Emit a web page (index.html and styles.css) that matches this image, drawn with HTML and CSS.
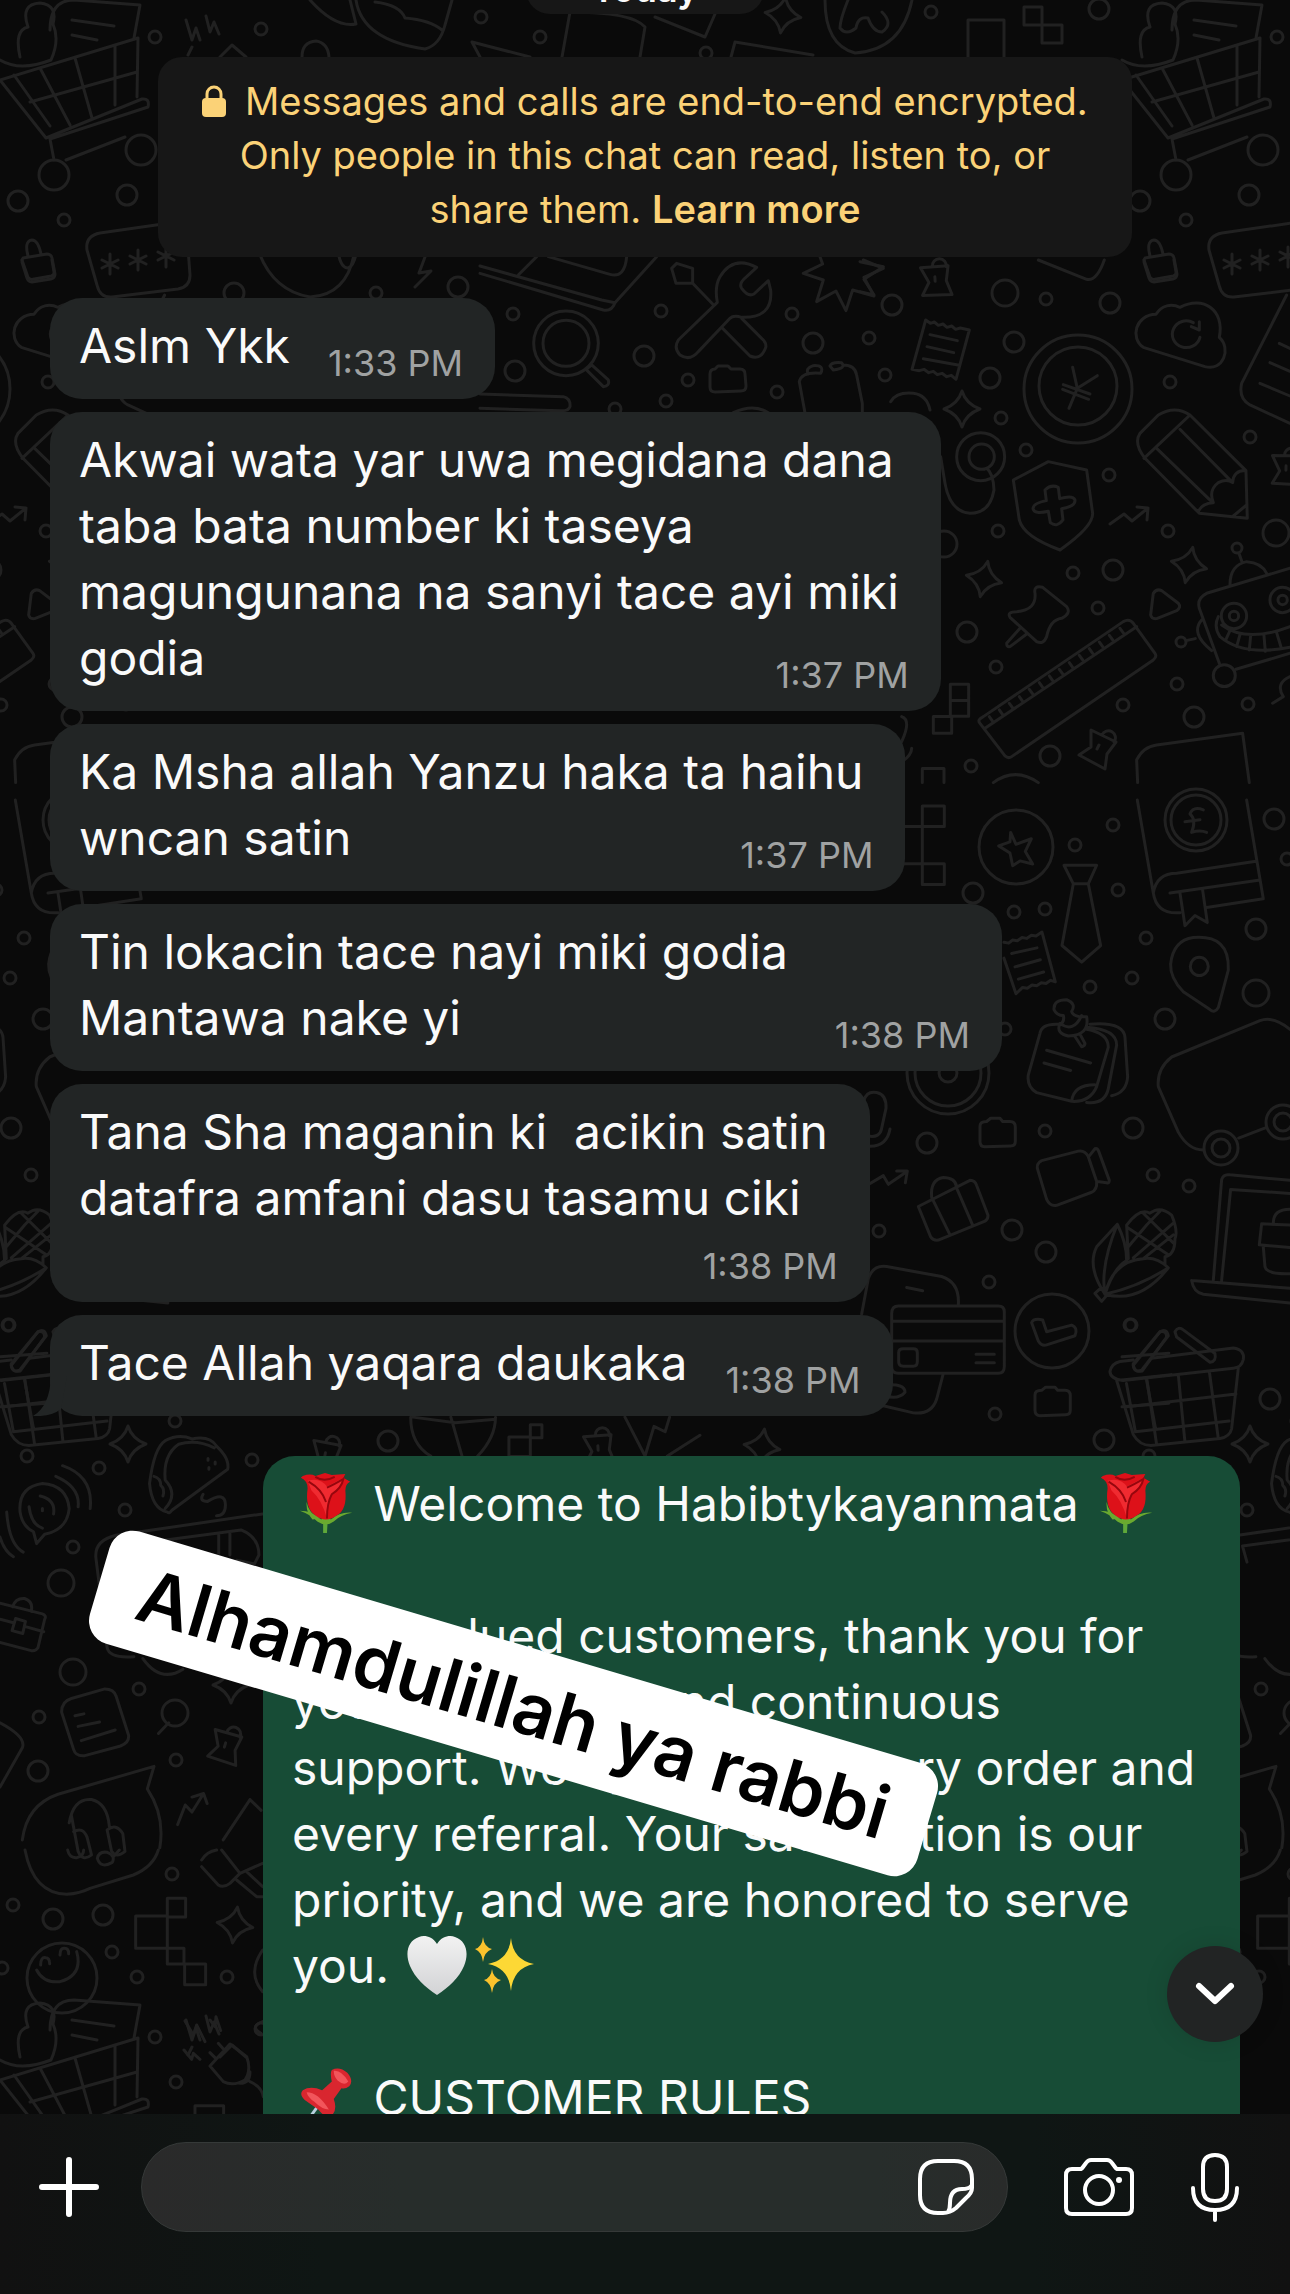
FILE: index.html
```html
<!DOCTYPE html>
<html lang="ha">

<head>
    <meta charset="UTF-8">
    <meta name="viewport" content="width=device-width, initial-scale=1.0">
    <title>Chat</title>
    <link rel="stylesheet" href="styles.css">
</head>

<body>
    <div class="screen">
        <main class="chat">
            <!-- wallpaper -->
            <svg class="wallpaper" aria-hidden="true">
                <defs>
                    <path id="sparkle" d="M0-18Q4-5 18 0Q4 5 0 18Q-4 5-18 0Q-4-5 0-18z" />
                    <path id="tack" d="M-7-17L18-5L9 7L7 22L-19 8L-7 0zM4-12a7 7 0 1 1 12 7M-1 2l2-4" />
                    <path id="trend" d="M-20 10L-6 0L2 7L18-6M7-7L18-6L17 6" />
                    <path id="folder" d="M-17-6q0-5 5-5l3-3h10l3 3h9q5 0 5 5l1 12q0 5-5 5l-26 1q-5 0-5-5z" />
                    <g id="doodles">
                        <!-- shopping cart -->
                        <path d="M0 80L138 38L137 97M0 80L46 138L142 99q8-1 6 8L50 139M14 75L50 126M40 68L70 125M75 58L92 118M115 46V105M30 102L137 72M50 139L54 160M66 160L125 137" />
                        <path d="M20 57Q14 30 28 27Q20 4 40 3Q58 5 53 24M50 30Q50 0 74 0L140 5L134 38M72 20L114 26M72 35L97 40M0 60Q20 72 51 60Q60 40 53 24" />
                        <circle cx="54" cy="175" r="15" /><circle cx="141" cy="150" r="15" />
                        <!-- password card and locks -->
                        <path d="M100 233L170 223q16-2 17 12L190 275q0 12-12 14L112 297q-12 1-15-12L87 250q-2-14 13-17zM110 254v20M102 260l16 8M118 260l-16 8M138 250v20M130 256l16 8M146 256l-16 8M166 247v20M158 252l16 8M174 252l-16 8" />
                        <path d="M23 258l24-4q4 0 5 4l3 16q0 4-4 5l-19 3q-4 0-5-4l-5-16q0-3 1-4zM28 256q-4-15 4-16q6 0 9 14" />
                        <path d="M255 240Q268 290 310 297Q352 295 356 240M338 250q2 18 10 18q8-2 10-28M425 257l-6 16l12-2l-16 16" />
                        <!-- top row -->
                        <path d="M186 20l6 20l4-12l4 12M206 16l4 16l4-10l5 12M188 55l4-8M220 57l12-12l14 12M302 57q0-15 14-16q12 2 13 16M310 0Q335 28 356 24L350 0M356 0Q362 40 425 49Q440 45 445 25L452 0M375 2Q400 5 405 18Q430 20 442 30M472 42l58 15M472 42l8 15M570 12q62 0 75 15l-5 30M570 12l-8 45M655 17l50 20l10-23M735 42l78 13M735 42l-4 15" />
                        <path d="M825 0q0 45 30 53Q902 50 912 0M848 0q-8 20-8 28q6 8 16 0q2-12 12-10q5 14 14 14q12-8 0-20M968 57V20h36v37M1024 7h18v18h-18zM1042 25h20v18h-20z" />
                        <use href="#sparkle" transform="translate(783 15) rotate(8)" />
                        <!-- laptop, magnifier, wrench and star -->
                        <g transform="translate(480 240) scale(.3333)">
                            <path d="M0 78L365 180L405 188L530 50M0 100L370 210Q395 215 405 188M115 105L170 50M205 50L390 103Q435 115 440 50M0 462L250 470Q272 475 270 500Q265 515 240 512L0 505" />
                            <circle cx="258" cy="310" r="97" /><circle cx="258" cy="310" r="69" />
                            <path d="M318 388L335 375L385 420Q390 438 370 440zM575 85L590 70L638 85V130H588zM638 130L698 192M830 82Q760 45 720 110Q703 140 712 187L595 300Q580 325 600 345Q630 365 655 335L750 235Q760 225 785 232Q880 235 872 150L865 122L822 162Q805 172 785 145Q775 130 800 110zM725 262L810 348Q845 362 858 320Q858 305 845 295L785 235" />
                            <path d="M1020 50L1028 72L970 100L1030 120L1010 185L1068 153L1098 212L1118 150L1182 168L1152 112L1210 85L1150 60M975 518L958 425Q965 395 1022 400Q1035 375 1000 377Q975 385 985 402M1050 378Q1055 365 1085 368Q1100 385 1060 390zM1090 375Q1125 375 1130 405L1147 490V518M760 518Q820 490 865 518" />
                        </g>
                        <use href="#folder" x="727" y="380" />
                        <use href="#tack" transform="translate(935 279) rotate(-30)" />
                        <!-- receipt, coin, cloud, pencil and the rest of that block -->
                        <g transform="translate(860 260) scale(.3333)">
                            <path d="M197 180l14 10l12-4l12 10l14-4l12 10l14-4l12 10l14-4l27 6L288 358l-14-12l-14 4l-14-10l-14 4l-12-10l-14 4l-14-10l-14 4l-22-4zM210 224l82 18M201 260l80 18M190 296l108 20" />
                            <path d="M535 0L680 58Q710 65 733 0M852 0L870 52Q875 60 885 58L940 48Q950 45 948 35L942 0M0 5L70 20L12 58L42 105L0 95" />
                            <path d="M638 322L652 385L712 347M652 385L627 445M610 374l80 28M608 388l78 30" />
                            <path d="M850 262C810 235 825 165 888 163C905 135 935 130 960 142C1030 105 1095 150 1078 232C1115 265 1090 335 1035 320zM1020 232A42 40 0 1 1 1000 188M1018 185L1018 210L994 200" />
                            <path d="M1280 105L1145 370Q1135 415 1170 435L1290 490M1258 250l32 15M1230 308l60 26M1200 370l90 38" />
                            <path d="M855 595Q820 550 840 520L895 465Q945 435 990 465L1158 632L1162 775L1018 760zM852 595L990 465M890 565L1055 725M960 508L1115 665M1015 755Q1025 730 1060 728Q1045 690 1075 668Q1100 655 1118 668Q1120 630 1158 632M1120 768L1160 735" />
                            <circle cx="362" cy="590" r="72" /><circle cx="365" cy="590" r="38" />
                            <path d="M380 625Q400 640 402 690Q390 760 330 760Q270 755 255 670L242 590M92 425Q110 395 160 400Q200 405 210 450" />
                            <path d="M565 605L680 630L698 760Q700 800 600 870Q490 830 478 780L460 660zM555 690q18-18 40-8l4 34q40-12 46 4q2 20-40 26l4 34q-18 24-38 8l-6-34q-42 10-46-8q0-16 40-24z" />
                            <path d="M525 1000Q520 975 548 982L620 1040Q635 1060 605 1075Q570 1080 560 1130Q550 1155 530 1145L450 1072Q440 1055 470 1055Q530 1050 525 1000zM480 1105L440 1150Q440 1162 450 1160L500 1122" />
                            <path d="M880 1000Q890 985 905 992L955 1030Q965 1042 950 1052L890 1076Q875 1078 872 1065z" />
                            <path d="M360 1390Q350 1380 370 1370L790 1085Q808 1075 820 1090L885 1180Q892 1190 880 1200L455 1490Q445 1497 435 1488zM375 1405L830 1100M388 1370l10 14M418 1350l10 14M448 1330l10 14M478 1310l10 14M508 1288l10 14M538 1268l10 14M568 1248l10 14M598 1228l10 14M628 1208l10 14M658 1186l10 14M688 1166l10 14M718 1146l10 14M748 1126l10 14M780 1105l10 14" />
                            <path d="M1290 925L1040 1000Q1010 1015 1018 1045L1080 1215M1110 975Q1110 915 1160 905Q1205 908 1220 940M1137 880l10 28M1025 1080Q990 1120 1055 1172M978 1142l28-6M1128 1228L1290 1180M1075 1070Q1060 1100 1080 1130Q1150 1190 1290 1162M1085 1095Q1160 1150 1290 1100M1110 1112l-12 26M1140 1124l-10 36M1172 1128l-4 42M1212 1126l4 48M1250 1118l14 46" />
                            <circle cx="1122" cy="1068" r="38" /><circle cx="1268" cy="1020" r="38" /><circle cx="1093" cy="1247" r="33" /><circle cx="1122" cy="1068" r="14" /><circle cx="1268" cy="1020" r="14" />
                            <path d="M271 1273h55v96h-55zM271 1322h55M220 1370h55v50h-55zM187 1568v-42h65v42M0 1290L155 1310Q235 1280 235 1205M125 1370q30 10 0 75M155 1465q0 20-28 40M1290 1250q-45 20-20 60l-32 20" />
                            <path d="M400 1568Q465 1520 535 1568M833 1568L830 1500Q850 1460 890 1455L1148 1420L1168 1568" />
                        </g>
                        <circle cx="1078" cy="389" r="54" /><circle cx="1078" cy="386" r="39" />
                        <use href="#sparkle" x="962" y="409" /><use href="#sparkle" transform="translate(984 579) rotate(12)" /><use href="#sparkle" transform="translate(1189 565) rotate(12)" />
                        <use href="#trend" x="1130" y="514" />
                        <use href="#tack" x="1098" y="747" /><use href="#tack" transform="translate(1286 468) rotate(-25)" />
                        <!-- book, tie, notes, corn, basket -->
                        <g transform="matrix(.3333 0 0 .3954 860 800)">
                            <path d="M832 0L880 235Q890 290 960 285M1160 0L1210 250L1040 272M960 285M880 235Q890 185 950 185L1188 155M930 235L1195 203M960 235L975 318L1005 292L1042 310L1028 228M1040 82Q1020 75 995 82Q1010 50 990 35Q1000 15 1030 25M975 55l45-5" />
                            <path d="M187 15h66v52h-66zM120 67h67v94h-67M187 161h66v53h-66z" />
                            <path d="M452 82l16 30l46-14l-18 32l22 32l-38-8l-22 12l-8-32l-34-18l34-10z" />
                            <path d="M612 165H710L685 212H640zM640 212L606 368L665 410L722 368L685 212" />
                            <path d="M432 360l14 2l12-8l14 2l14-8l14 2l14-8l14 2l18-10L586 460l-14-4l-14 8l-14-2l-14 8l-14-2l-14 8l-14-2l-20 16L432 400M455 388l76-14M465 422l76-18M475 453l76-18" />
                            <path d="M1000 348Q1110 340 1105 430L1075 525Q1065 540 1050 530L970 485Q930 450 932 415Q940 355 1000 348z" />
                            <ellipse cx="1018" cy="421" rx="27" ry="23" />
                            <path d="M595 567Q545 565 540 590L505 695Q500 725 530 740L635 762Q690 765 710 725L745 625Q745 590 680 580M635 762Q640 720 705 720M680 575Q770 580 770 620L745 730Q735 770 680 765M690 567Q790 560 795 600L803 700Q800 740 755 748M560 633L692 665M552 665L632 684M582 530Q580 505 620 505Q650 515 635 535Q640 550 680 548Q690 595 625 597Q590 590 598 570Q615 560 610 545Q590 545 582 530zM600 565Q640 590 665 545M645 598l20 26q10-2 10-8l-15-24" />
                            <path d="M1290 580Q1240 545 1200 558L935 650Q890 680 895 725L955 840Q985 885 1030 885M1136 855L1220 828M1060 1215L1085 960Q1090 945 1110 948L1290 962M1085 1215L1112 985L1290 995M995 1215L1290 1235M995 1215Q1000 1245 1030 1250L1290 1272M1290 1075L1205 1072L1198 1125L1290 1132M1210 1130L1215 1180Q1220 1200 1290 1198M1240 1070Q1240 1035 1290 1035" />
                            <path d="M360 825q0-12 20-12l12-8h28l8 8h22q16 0 16 14v36q0 12-14 12l-78 2q-14 0-14-14zM525 1505q0-12 20-12l12-8h28l8 8h22q16 0 16 14v36q0 12-14 12l-78 2q-14 0-14-14z" />
                            <path d="M535 940Q525 920 545 912L655 888Q675 885 685 902L710 965Q712 985 695 992L590 1025Q570 1028 560 1010zM688 900L705 882Q712 880 716 888L748 962Q748 970 740 968L712 965" />
                            <path d="M175 1028L330 962Q345 962 350 975L384 1050Q385 1060 375 1065L235 1113Q220 1115 212 1105zM215 1005Q210 960 250 955Q285 955 290 978M215 1005L270 1100M288 978L338 1075M0 985L70 950L85 972L140 940M110 938h32l-6 30M12 760Q20 735 50 740Q80 745 78 780L65 830Q60 855 25 850M90 832Q80 880 20 875" />
                            <path d="M735 1250Q680 1180 710 1130L772 1073Q800 1120 800 1165Q760 1185 735 1250zM735 1250Q720 1180 772 1073M735 1250Q760 1165 850 1160Q890 1155 925 1183Q840 1275 735 1250Q840 1230 925 1183M705 1248l18-14l20 16l-18 18zM800 1075Q840 1030 870 1045Q900 1025 935 1050Q955 1090 945 1110Q945 1150 915 1155V1175M800 1075L805 1160M800 1080L925 1150M850 1045L940 1120M805 1130L860 1075L900 1040M820 1158L940 1070M850 1160L940 1100" />
                            <path d="M5 1300L25 1210Q40 1175 80 1180L245 1205Q300 1220 295 1278M140 1233l48 8M115 1280H415Q433 1280 433 1295V1432Q433 1450 415 1450H115Q95 1450 95 1432V1300Q95 1280 115 1280zM95 1318H433M95 1368H433M130 1388h30q12 0 12 10v22q0 12-12 12h-30q-14 0-14-12v-22q0-10 14-10zM348 1402h55M348 1423h55M250 1450L230 1515Q215 1555 160 1550L60 1530M75 1480q60-5 60 18q-20 20-65 8" />
                            <path d="M515 1322Q520 1310 548 1315L560 1345L635 1328Q655 1335 645 1355L560 1378Q545 1382 535 1368z" />
                            <path d="M875 1412L1120 1386Q1155 1390 1150 1415Q1145 1435 1120 1437L790 1468Q750 1465 750 1445Q755 1425 780 1420L820 1416M820 1430L900 1345Q920 1335 925 1355L845 1442Q825 1450 820 1430zM945 1345Q955 1330 970 1340L1065 1400Q1070 1420 1050 1422L950 1358zM770 1468L820 1605Q840 1635 880 1632L1080 1615Q1110 1610 1115 1590L1135 1436M860 1462L890 1630M955 1454L975 1624M1048 1444L1075 1615M795 1535L1128 1502" />
                        </g>
                        <circle cx="1016" cy="847" r="37" /><circle cx="1052" cy="1331" r="37" /><circle cx="948" cy="1073" r="41" /><circle cx="948" cy="1073" r="33" /><circle cx="948" cy="1073" r="9" />
                        <circle cx="1221" cy="1148" r="17" /><circle cx="1221" cy="1148" r="9" /><circle cx="1283" cy="1122" r="17" /><circle cx="1283" cy="1122" r="9" /><circle cx="1196" cy="820" r="31" /><circle cx="1196" cy="820" r="25" />
                        <!-- taco, bell, briefcase, headset -->
                        <g transform="matrix(.4464 0 0 .3571 0 1280)">
                            <path d="M375 650Q340 640 335 570Q345 470 370 450Q400 430 430 445Q470 435 485 465Q515 500 510 530L385 645Q380 655 375 650zM370 640Q400 600 370 560Q365 490 400 460Q440 445 480 470M345 550q15 5 15 25q10 10 5 30M455 600q-10 20 10 20q40-30 40 10q0 30-20 30M466 500v5M482 510v5M468 525v5" />
                            <path d="M45 650Q40 580 95 570Q150 575 155 640Q150 700 100 712L82 738L75 705Q50 690 45 650zM65 635q5 50 30 60M90 605q35 10 30 50M95 640v6M140 520Q210 550 202 640M125 550Q180 580 175 635M15 650Q20 740 52 762M0 720q10 40 30 55" />
                            <path d="M588 655L260 715Q210 730 215 780L240 1030Q245 1060 300 1055M280 790L270 745L540 700Q580 720 580 770L570 795L530 785M490 715v50M515 710v60M320 1060Q360 1130 410 1090" />
                            <path d="M0 905L95 935Q105 940 100 950L85 1030Q80 1040 70 1038L0 1015M0 950L30 960M55 970L98 985M28 915Q35 890 55 892Q75 900 70 928M35 948l22 8l-6 34l-24-8z" />
                            <path d="M160 1172L235 1145Q255 1145 260 1165L288 1275Q290 1295 270 1305L190 1332Q170 1335 165 1315L138 1210Q138 1180 160 1172zM168 1220l20-5M175 1250l48-12M182 1290l76-30M378 1240L355 1270M0 1240Q60 1280 50 1310L0 1420" />
                            <path d="M50 1568Q60 1470 130 1440L345 1362L330 1425Q370 1500 358 1590M155 1520Q165 1450 205 1455Q240 1465 245 1530M160 1500L175 1600Q185 1630 205 1610L195 1560Q185 1530 165 1545M240 1540q20-20 35 10l5 50q-20 20-30 0zM560 1455L585 1485M560 1455L500 1568M398 1525L415 1470L430 1490L455 1440M430 1448l26-10l8 28" />
                            <path d="M920 384Q920 460 965 493M1110 384Q1110 440 1070 493M1010 384L1035 493M925 384l95 16l90-10M1140 440h48v54h-48zM1188 405h26v37h-26zM1400 384L1445 493L1465 410L1490 425L1500 384M1568 435L1495 493" />
                            <path d="M0 215L105 205M25 235L85 145Q100 140 100 160L45 255Q25 260 25 235zM0 280L110 265M10 290L30 425L240 395M55 280L75 415M0 355L105 345" />
                        </g>
                        <use href="#tack" transform="translate(225 1745) rotate(-10)" /><use href="#tack" transform="translate(325 1455) rotate(-15)" /><use href="#tack" transform="translate(598 1448) rotate(-30)" />
                        <use href="#sparkle" x="128" y="1444" /><use href="#sparkle" x="231" y="1685" /><use href="#sparkle" transform="translate(762 1447) rotate(8)" /><use href="#sparkle" transform="translate(235 1925) rotate(8)" />
                        <!-- bottom left corner -->
                        <g transform="translate(0 1850) scale(.3333)">
                            <path d="M75 0Q100 130 200 133Q240 130 270 115L400 75Q460 50 475 0M203 0q5 25 28 23q20-5 20-23M292 25q5-22 30-18q25 10 15 30q-35 20-45-12zM340 20L358 0M605 30Q620 5 650 0M605 50L655 105Q670 115 690 100L720 70L665 0M720 70L788 40M710 90L770 140H788M740 65L788 110" />
                            <path d="M407 198h95v97h-95zM502 145h55v56h-55zM502 295h50v47h-50zM554 342h63v62h-63z" />
                            <path d="M110 360Q130 400 180 395Q250 375 230 305M122 345q0-25 15-22q12 0 12 18M180 315q0-22 14-20q12 0 12 16M788 300Q740 370 788 425M788 515q-40 15-5 35" />
                            <path d="M555 513L580 555L590 525L615 575M630 510L645 530L648 500L662 542M552 600L575 628L580 610L600 628M630 648L690 582L740 620Q755 660 735 690Q700 710 670 695zM655 580l18 20M630 608l18 18M720 700Q750 700 750 665M750 695Q785 710 790 740" />
                            <path d="M585 792V767h86v25" />
                        </g>
                        <circle cx="62" cy="1978" r="35" />
                        <!-- loose dots -->
                        <g>
                            <circle cx="892" cy="305" r="10" /><circle cx="1005" cy="293" r="13" /><circle cx="1046" cy="299" r="6" /><circle cx="1110" cy="303" r="10" /><circle cx="869" cy="338" r="6" /><circle cx="1014" cy="342" r="10" /><circle cx="885" cy="375" r="6" /><circle cx="990" cy="378" r="10" /><circle cx="1170" cy="382" r="6" /><circle cx="1001" cy="418" r="6" /><circle cx="1026" cy="450" r="6" /><circle cx="1109" cy="475" r="6" /><circle cx="1250" cy="437" r="6" /><circle cx="998" cy="531" r="6" /><circle cx="1168" cy="531" r="6" /><circle cx="1276" cy="533" r="13" /><circle cx="944" cy="544" r="13" /><circle cx="1073" cy="573" r="6" /><circle cx="1113" cy="570" r="10" /><circle cx="1098" cy="608" r="6" /><circle cx="967" cy="632" r="10" /><circle cx="996" cy="667" r="6" /><circle cx="1177" cy="684" r="6" /><circle cx="1248" cy="704" r="6" /><circle cx="1123" cy="705" r="6" /><circle cx="1194" cy="717" r="10" /><circle cx="1050" cy="756" r="10" /><circle cx="971" cy="766" r="6" /><circle cx="1237" cy="548" r="5" /><circle cx="1181" cy="642" r="5" />
                            <circle cx="1075" cy="845" r="6" /><circle cx="1113" cy="825" r="6" /><circle cx="1274" cy="819" r="10" /><circle cx="1287" cy="859" r="6" /><circle cx="973" cy="893" r="10" /><circle cx="1014" cy="912" r="6" /><circle cx="1045" cy="909" r="6" /><circle cx="1118" cy="890" r="6" /><circle cx="1146" cy="938" r="6" /><circle cx="1132" cy="978" r="6" /><circle cx="1090" cy="987" r="6" /><circle cx="1256" cy="929" r="10" /><circle cx="1256" cy="993" r="13" /><circle cx="1165" cy="1019" r="10" /><circle cx="1005" cy="1029" r="6" /><circle cx="1133" cy="1128" r="10" /><circle cx="1045" cy="1131" r="6" /><circle cx="927" cy="1143" r="10" /><circle cx="1153" cy="1175" r="6" /><circle cx="1189" cy="1186" r="6" /><circle cx="879" cy="1231" r="6" /><circle cx="1012" cy="1230" r="10" /><circle cx="1046" cy="1252" r="10" /><circle cx="989" cy="1282" r="6" /><circle cx="1131" cy="1325" r="6" /><circle cx="1270" cy="1399" r="10" /><circle cx="995" cy="1414" r="6" /><circle cx="1104" cy="1440" r="10" />
                            <circle cx="8" cy="1325" r="6" /><circle cx="175" cy="1421" r="6" /><circle cx="27" cy="1456" r="6" /><circle cx="99" cy="1468" r="6" /><circle cx="252" cy="1460" r="6" /><circle cx="388" cy="1441" r="10" /><circle cx="125" cy="1510" r="6" /><circle cx="73" cy="1547" r="6" /><circle cx="61" cy="1583" r="13" /><circle cx="139" cy="1689" r="6" /><circle cx="73" cy="1672" r="13" /><circle cx="39" cy="1717" r="6" /><circle cx="176" cy="1760" r="6" /><circle cx="38" cy="1771" r="10" /><circle cx="175" cy="1713" r="13" /><circle cx="172" cy="1874" r="6" /><circle cx="13" cy="1905" r="6" /><circle cx="53" cy="1919" r="10" /><circle cx="103" cy="1915" r="10" /><circle cx="112" cy="1952" r="6" /><circle cx="137" cy="1977" r="6" /><circle cx="227" cy="1977" r="6" /><circle cx="2" cy="1968" r="6" /><circle cx="176" cy="2082" r="6" />
                            <circle cx="155" cy="37" r="6" /><circle cx="261" cy="29" r="6" /><circle cx="481" cy="17" r="6" /><circle cx="540" cy="37" r="6" /><circle cx="931" cy="12" r="6" /><circle cx="1099" cy="9" r="10" /><circle cx="18" cy="201" r="10" /><circle cx="127" cy="195" r="10" /><circle cx="64" cy="220" r="6" /><circle cx="234" cy="293" r="10" /><circle cx="376" cy="293" r="6" /><circle cx="458" cy="287" r="10" /><circle cx="706" cy="53" r="6" />
                            <circle cx="513" cy="314" r="6" /><circle cx="515" cy="371" r="10" /><circle cx="644" cy="356" r="10" /><circle cx="661" cy="311" r="6" /><circle cx="688" cy="380" r="6" /><circle cx="666" cy="401" r="6" /><circle cx="615" cy="409" r="6" /><circle cx="777" cy="392" r="6" /><circle cx="792" cy="314" r="6" /><circle cx="813" cy="343" r="10" />
                        </g>
                    </g>
                </defs>
                <use href="#doodles" />
                <use href="#doodles" x="-1122" />
                <use href="#doodles" x="1122" />
                <use href="#doodles" y="2000" />
            </svg>

            <div class="day">Today</div>

            <div class="notice">
                <svg class="lock" viewBox="0 0 24 32" aria-hidden="true">
                    <rect x="0" y="13" width="24" height="19" rx="4" fill="currentColor" />
                    <path d="M5 15V9a7 7 0 0 1 14 0v6" fill="none" stroke="currentColor" stroke-width="3" />
                </svg>
                Messages and calls are end-to-end encrypted.<br>Only people in this chat can read, listen to, or<br>share them. <a href="#">Learn more</a>
            </div>

            <div class="bubble">Aslm Ykk<time class="time">1:33 PM</time></div>
            <div class="bubble">Akwai wata yar uwa megidana dana<br>taba bata number ki taseya<br>magungunana na sanyi tace ayi miki<br>godia<time class="time">1:37 PM</time></div>
            <div class="bubble">Ka Msha allah Yanzu haka ta haihu<br>wncan satin<time class="time">1:37 PM</time></div>
            <div class="bubble wide">Tin lokacin tace nayi miki godia<br>Mantawa nake yi<time class="time">1:38 PM</time></div>
            <div class="bubble time-below">Tana Sha maganin ki&nbsp; acikin satin<br>datafra amfani dasu tasamu ciki<time class="time">1:38 PM</time></div>
            <div class="bubble">Tace Allah yaqara daukaka<time class="time">1:38 PM</time>
                <svg class="tail" viewBox="0 0 34 40" aria-hidden="true"><path d="M18 0Q17 30 0 40Q18 41 28 33L34 0z" fill="currentColor" /></svg>
            </div>

            <div class="bubble sent"><svg class="emoji" viewBox="0 0 56 62" role="img" aria-label="rose">
                    <path d="M25 45h5l-1 17h-4z" fill="#5fa83a" />
                    <path d="M1 39q13 0 22 9q3-3 5-2q3-1 5 2q9-8 22-7q-12 2-19 9q-8 6-17 0Q12 43 1 39zM8 30q2 12 14 17l-8 1q-7-8-6-18z" fill="#6aa92f" />
                    <path d="M4 3Q12 0 17 3L27 0L34 2L48 1L46 5L53 9Q48 11 48 18Q50 38 39 44Q28 52 17 44Q6 36 9 16Q9 8 2 5z" fill="#dd1119" />
                    <path d="M9 8Q22 4 29 14L46 5Q46 12 34 21Q29 30 29 47Q24 28 13 18z" fill="#f02a30" />
                    <path d="M29 15Q36 12 46 6Q44 16 34 22Q29 31 29 47M10 9Q24 17 28 30M17 4q9 6 20 0" fill="none" stroke="#96060d" stroke-width="2" />
                </svg> Welcome to Habibtykayanmata <svg class="emoji" viewBox="0 0 56 62" role="img" aria-label="rose">
                    <path d="M25 45h5l-1 17h-4z" fill="#5fa83a" />
                    <path d="M1 39q13 0 22 9q3-3 5-2q3-1 5 2q9-8 22-7q-12 2-19 9q-8 6-17 0Q12 43 1 39zM8 30q2 12 14 17l-8 1q-7-8-6-18z" fill="#6aa92f" />
                    <path d="M4 3Q12 0 17 3L27 0L34 2L48 1L46 5L53 9Q48 11 48 18Q50 38 39 44Q28 52 17 44Q6 36 9 16Q9 8 2 5z" fill="#dd1119" />
                    <path d="M9 8Q22 4 29 14L46 5Q46 12 34 21Q29 30 29 47Q24 28 13 18z" fill="#f02a30" />
                    <path d="M29 15Q36 12 46 6Q44 16 34 22Q29 31 29 47M10 9Q24 17 28 30M17 4q9 6 20 0" fill="none" stroke="#96060d" stroke-width="2" />
                </svg><br>
                <br>
                Dear valued customers, thank you for<br>
                your patronage and continuous<br>
                support. We appreciate every order and<br>
                every referral. Your satisfaction is our<br>
                priority, and we are honored to serve<br>
                you. <svg class="emoji" viewBox="0 0 60 60" role="img" aria-label="white heart">
                    <defs>
                        <linearGradient id="heart" x1="0" y1="0" x2="0" y2="1">
                            <stop offset="0" stop-color="#f2f2f2" />
                            <stop offset="1" stop-color="#d2d3d5" />
                        </linearGradient>
                    </defs>
                    <path d="M30 9C35 1 43 0 48 2C60 6 62 19 57 31C52 43 42 52 30 60C18 52 8 43 3 31C-2 19 0 6 12 2C17 0 25 1 30 9z" fill="url(#heart)" />
                </svg><svg class="emoji" viewBox="0 0 60 60" role="img" aria-label="sparkles">
                    <path d="M36 3Q38 25 59 29Q38 33 36 56Q34 33 13 29Q34 25 36 3z" fill="#fdd835" />
                    <path d="M8 2Q9 12 17 14Q9 17 8 27Q7 17 0 14Q7 12 8 2zM17 34Q18 43 26 45Q18 48 17 58Q16 48 9 45Q16 43 17 34z" fill="#fbc22d" />
                </svg><br>
                <br>
                <svg class="emoji" viewBox="0 0 60 62" role="img" aria-label="pushpin">
                    <path d="M22 40L6 62" stroke="#b9cfdf" stroke-width="3" />
                    <path d="M36 3Q44-1 52 6Q59 14 54 20Q50 23 46 22L38 33Q42 44 36 50Q30 54 22 44L8 34Q2 28 6 24Q14 19 26 24L36 15Q34 6 36 3z" fill="#d9262f" />
                    <path d="M38 4Q46 3 53 15Q49 20 42 14Q38 10 38 4zM10 26Q22 26 33 44Q26 44 18 36Q11 31 10 26z" fill="#f2555b" />
                </svg> CUSTOMER RULES
            </div>

            <div class="sticker">Alhamdulillah ya rabbi</div>

            <button class="scroll-down" type="button" aria-label="Scroll to latest message">
                <svg width="48" height="32" viewBox="0 0 48 32" aria-hidden="true"><path d="M8 8L24 23L40 8" fill="none" stroke="currentColor" stroke-width="6" stroke-linecap="round" stroke-linejoin="round" /></svg>
            </button>
        </main>

        <form class="composer">
            <button class="icon-button" type="button" aria-label="Attach">
                <svg width="60" height="60" viewBox="0 0 60 60"><path d="M30 3V57M3 30H57" stroke-width="6" /></svg>
            </button>
            <div class="field">
                <input type="text" aria-label="Message">
                <button class="icon-button" type="button" aria-label="Stickers">
                    <svg width="56" height="56" viewBox="0 0 56 56"><path d="M20 2H36Q54 2 54 20V29Q54 34 48 39L38 49Q32 54 25 54H20Q2 54 2 36V20Q2 2 20 2zM30 53Q32 50 32 44Q32 30 44 30Q51 30 53 27" stroke-width="4" /></svg>
                </button>
            </div>
            <button class="icon-button" type="button" aria-label="Camera">
                <svg width="70" height="58" viewBox="0 0 70 58"><path d="M8 11H16Q18 11 19 9L22 5Q24 2 27 2H43Q46 2 48 5L51 9Q52 11 54 11H62Q68 11 68 17V50Q68 56 62 56H8Q2 56 2 50V17Q2 11 8 11z" stroke-width="4" /><circle cx="35" cy="32" r="14" stroke-width="4" /><circle cx="55" cy="22" r="3" fill="currentColor" stroke="none" /></svg>
            </button>
            <button class="icon-button mic" type="button" aria-label="Voice message">
                <svg width="48" height="70" viewBox="0 0 48 70"><path d="M24 3Q36 3 36 15V37Q36 49 24 49Q12 49 12 37V15Q12 3 24 3zM2 36Q2 58 24 58Q46 58 46 36M24 58V68" stroke-width="4" /></svg>
            </button>
        </form>
    </div>
</body>

</html>
```

FILE: styles.css
```css
* {
    box-sizing: border-box;
}

body {
    margin: 0;
    background: #0a0a0a;
    color: #fafafa;
    font-family: Inter, "Noto Sans", sans-serif;
}

.screen {
    display: flex;
    flex-direction: column;
    height: 100vh;
}

.chat {
    position: relative;
    display: flex;
    flex: 1;
    flex-direction: column;
    align-items: flex-start;
    min-height: 0;
    padding: 0 50px;
    overflow: hidden;
}

.chat > * {
    flex-shrink: 0;
}

.wallpaper {
    position: absolute;
    top: 0;
    left: 0;
    width: 100%;
    height: 100%;
    fill: none;
    stroke: #212121;
    stroke-width: 3px;
    stroke-linejoin: round;
    stroke-linecap: round;
}

.wallpaper path,
.wallpaper circle,
.wallpaper ellipse {
    vector-effect: non-scaling-stroke;
}

.day {
    position: relative;
    align-self: center;
    margin-top: -42px;
    padding: 6px 66px 0;
    border-radius: 24px;
    background: #171717;
    font-size: 36px;
    font-weight: 600;
    line-height: 50px;
}

.notice {
    position: relative;
    align-self: center;
    margin: 43px 0 41px;
    padding: 17px 44px 21px;
    border-radius: 24px;
    background: #171717;
    color: #fbd277;
    font-size: 38px;
    line-height: 54px;
    text-align: center;
}

.notice a {
    color: inherit;
    font-weight: 600;
    text-decoration: none;
}

.lock {
    width: 24px;
    height: 32px;
    margin-right: 8px;
    vertical-align: -2px;
}

.bubble {
    position: relative;
    margin-bottom: 13px;
    padding: 15px 42px 20px 29px;
    border-radius: 32px;
    background: #222525;
    font-size: 48px;
    line-height: 66px;
}

.bubble.wide {
    width: 80%;
}

.time {
    float: right;
    margin: 34px -10px 0 38px;
    color: #a0a2a2;
    font-size: 36px;
    line-height: 32px;
}

.time-below .time {
    float: none;
    display: block;
    margin: 19px -10px 0 0;
    text-align: right;
}

.tail {
    position: absolute;
    left: -17px;
    bottom: 0;
    width: 34px;
    height: 40px;
    color: #222525;
}

.bubble.sent {
    align-self: flex-end;
    width: calc(100% - 213px);
    margin-top: 27px;
    padding-right: 0;
    background: #174c36;
    white-space: nowrap;
}

.emoji {
    width: 60px;
    height: 60px;
    margin: 0 4px;
    vertical-align: -12px;
}

.sticker {
    position: absolute;
    top: 1645px;
    left: 82px;
    padding: 0 42px;
    border-radius: 24px;
    background: #fff;
    color: #000;
    font-size: 73px;
    font-weight: 600;
    line-height: 117px;
    transform: rotate(16.5deg);
}

.scroll-down {
    position: absolute;
    right: 27px;
    bottom: 72px;
    display: flex;
    align-items: center;
    justify-content: center;
    width: 96px;
    height: 96px;
    padding: 0;
    border: 0;
    border-radius: 50%;
    background: #222424;
    color: #fff;
    box-shadow: 0 0 24px rgba(0, 0, 0, 0.12);
}

.composer {
    display: flex;
    align-items: center;
    padding: 28px 51px 62px 39px;
    background: linear-gradient(90deg, #111111, #0f1614 25%, #0f1614 80%, #111111);
}

.field {
    display: flex;
    flex: 1;
    align-items: center;
    min-width: 0;
    height: 90px;
    margin: 0 56px 0 42px;
    padding: 0 33px;
    border: 1px solid #353938;
    border-radius: 45px;
    background: linear-gradient(90deg, #2a2a2a, #272d2b 30%, #272d2b 85%, #292b2a);
}

.field input {
    flex: 1;
    min-width: 0;
    border: 0;
    outline: 0;
    background: none;
    color: #fff;
    font-family: inherit;
    font-size: 48px;
}

.icon-button {
    display: flex;
    padding: 0;
    border: 0;
    background: none;
    color: #fff;
}

.icon-button svg {
    fill: none;
    stroke: currentColor;
    stroke-linecap: round;
    stroke-linejoin: round;
}

.mic {
    margin-left: 57px;
}
```
